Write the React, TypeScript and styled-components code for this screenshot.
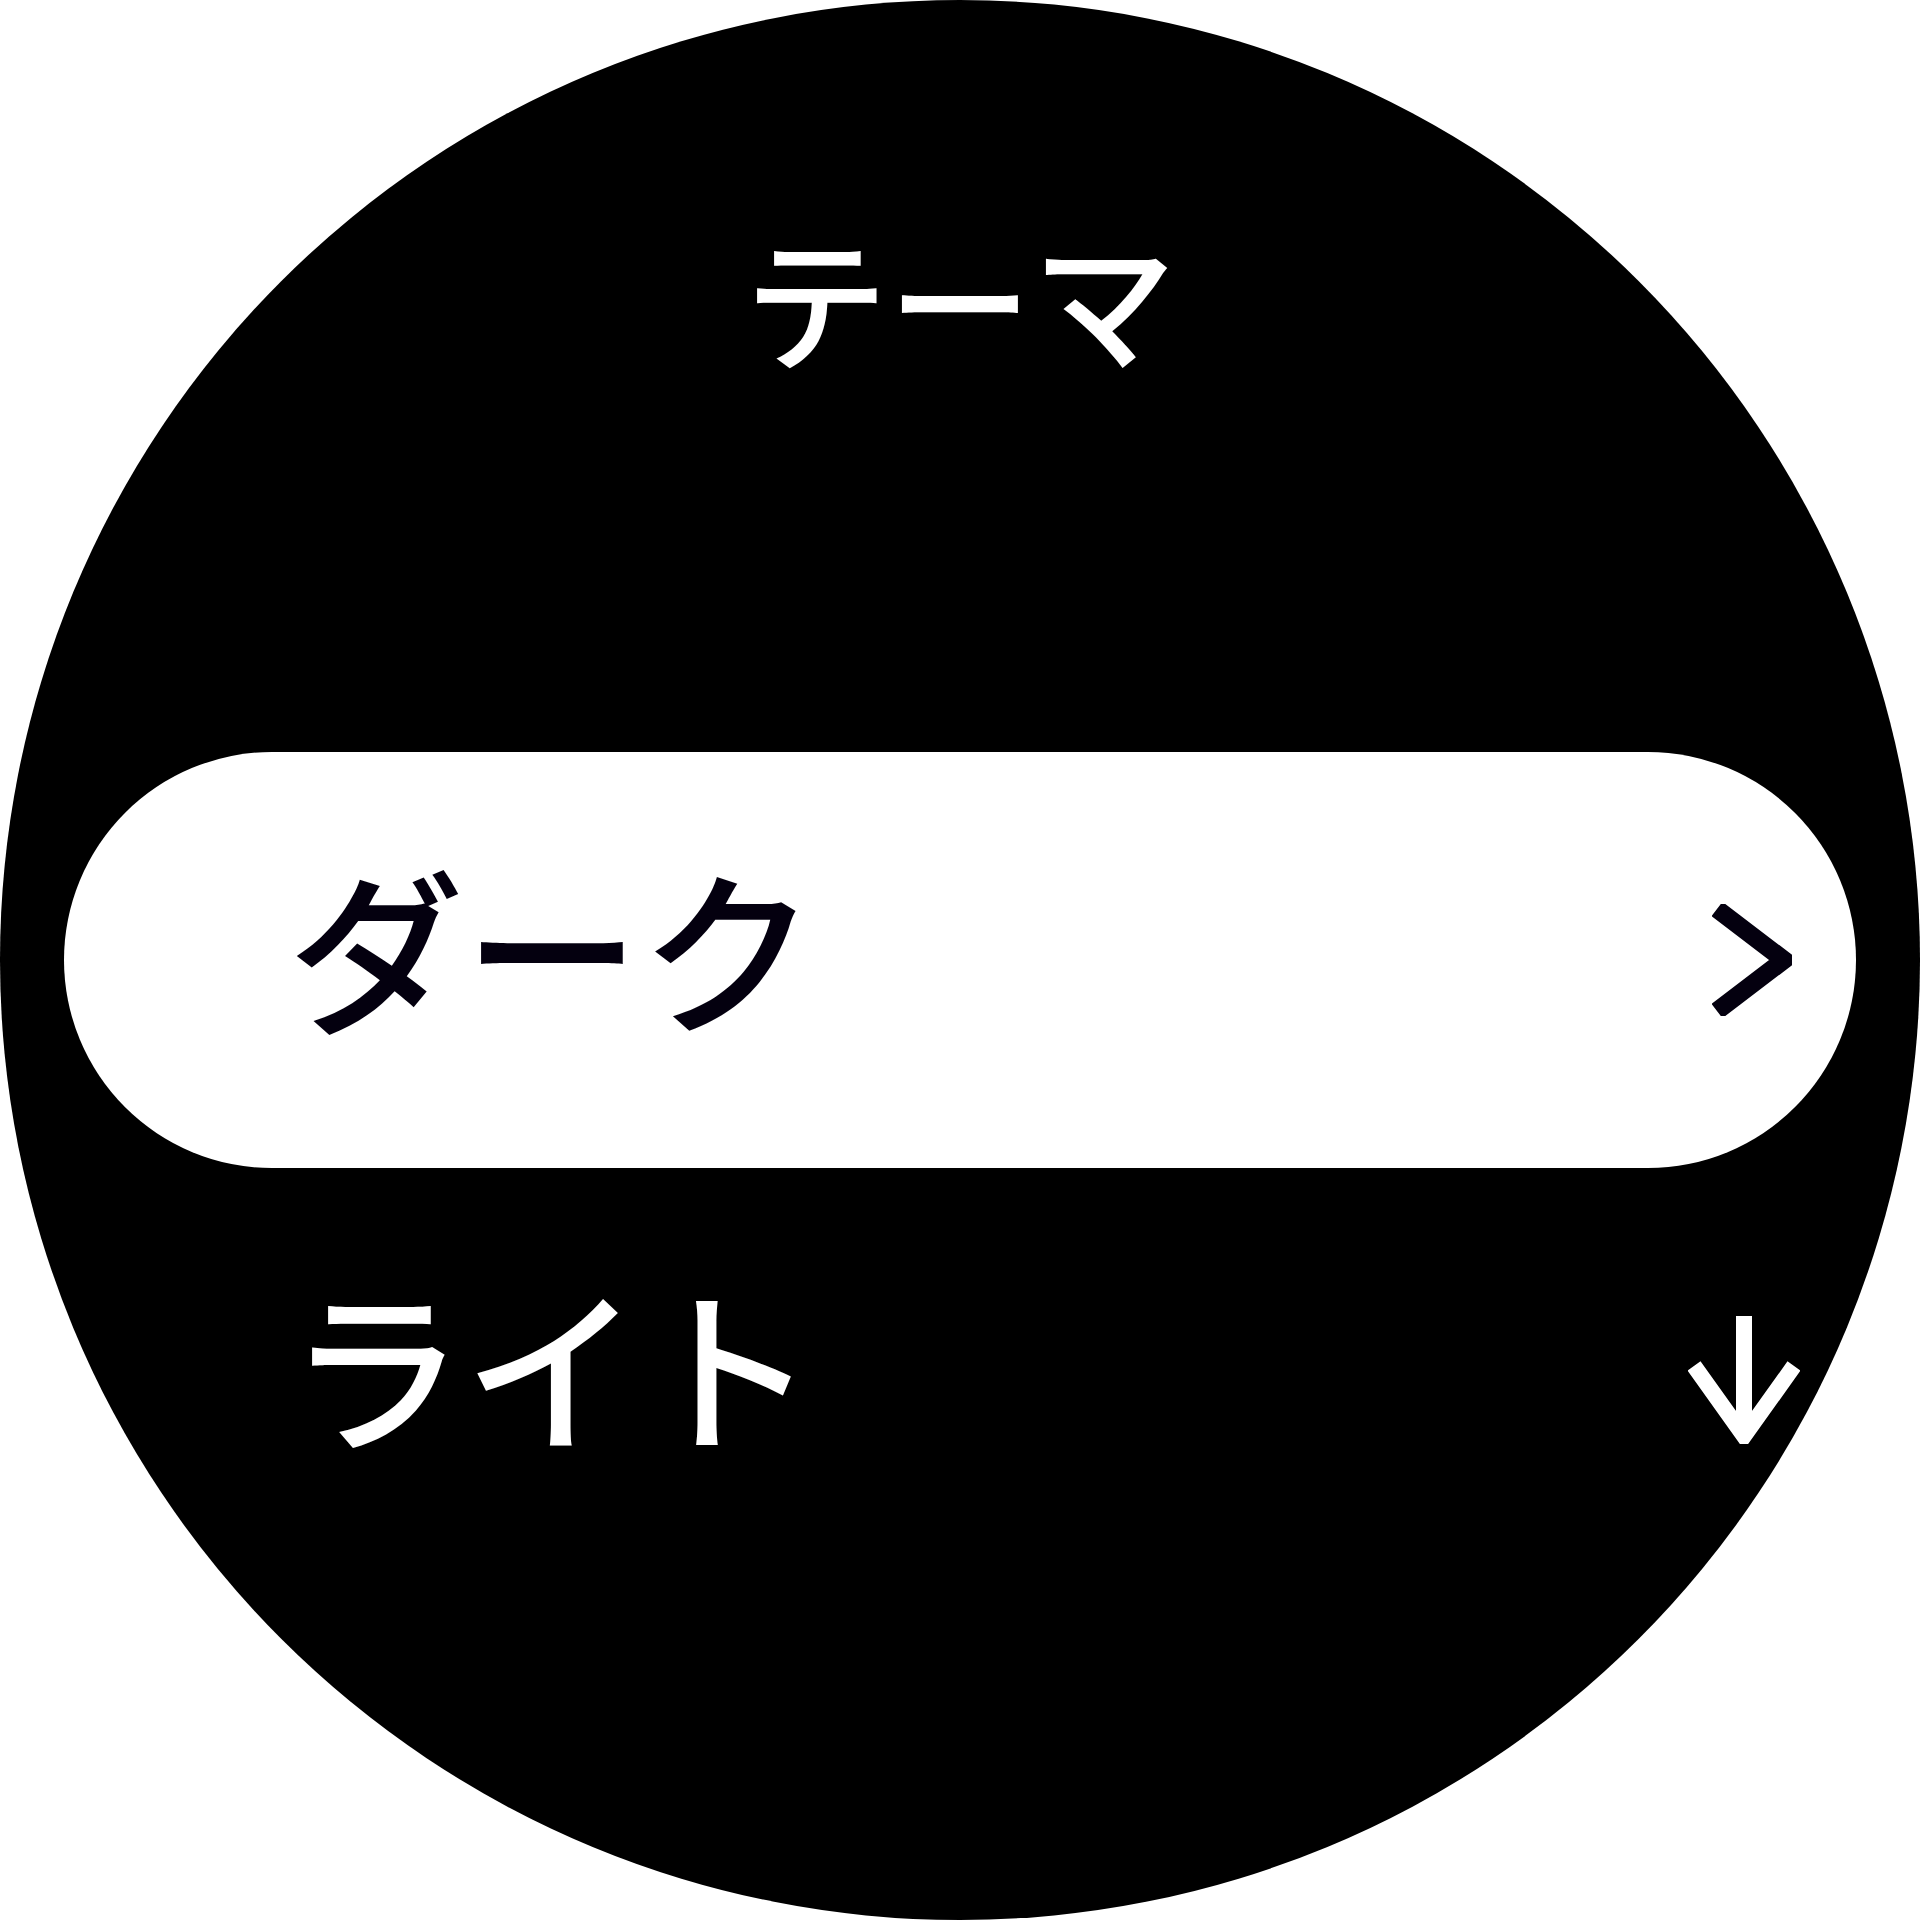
import React from "react";
import styled, { createGlobalStyle } from "styled-components";

const GlobalStyle = createGlobalStyle`
  html, body {
    margin: 0;
    padding: 0;
    background: #ffffff;
  }
  body {
    font-family: "Noto Sans CJK JP", "Noto Sans", sans-serif;
  }
`;

const Screen = styled.div`
  width: 1920px;
  height: 1920px;
  border-radius: 50%;
  background: #000000;
  overflow: hidden;
  display: flex;
  flex-direction: column;
  align-items: stretch;
  padding: 225px 64px 0;
  box-sizing: border-box;
`;

const Title = styled.h1`
  margin: 0;
  font-size: 144px;
  line-height: 1;
  font-weight: 500;
  color: #ffffff;
  text-align: center;
`;

const List = styled.div`
  display: flex;
  flex-direction: column;
  margin-top: 383px;
`;

interface OptionProps {
  $selected?: boolean;
}

const Option = styled.div<OptionProps>`
  display: flex;
  align-items: center;
  justify-content: space-between;
  height: 416px;
  box-sizing: border-box;
  padding: 0 64px 0 224px;
  border-radius: 208px;
  background: ${(p) => (p.$selected ? "#ffffff" : "transparent")};
  color: ${(p) => (p.$selected ? "#04000f" : "#ffffff")};
`;

const NextRow = styled.div`
  display: flex;
  align-items: flex-end;
  justify-content: space-between;
  padding: 107px 56px 0 224px;
  color: #ffffff;
`;

const Label = styled.span`
  font-size: 176px;
  line-height: 1;
  font-weight: 500;
`;

const OptionLabel = styled(Label)`
  padding-bottom: 30px;
`;

const ArrowIcon = styled.svg`
  display: block;
  margin-bottom: 7px;
`;

const Chevron = () => (
  <svg width="80" height="112" viewBox="0 0 80 112">
    <polyline
      points="5,5 72,56 5,107"
      fill="none"
      stroke="currentColor"
      strokeWidth="18"
    />
  </svg>
);

const DownArrow = () => (
  <ArrowIcon width="112" height="128" viewBox="0 0 112 128">
    <line x1="56" y1="0" x2="56" y2="118" stroke="currentColor" strokeWidth="16" />
    <polyline
      points="6,50 56,120 106,50"
      fill="none"
      stroke="currentColor"
      strokeWidth="16"
    />
  </ArrowIcon>
);

export default function App() {
  return (
    <>
      <GlobalStyle />
      <Screen>
        <Title>テーマ</Title>
        <List>
          <Option $selected>
            <OptionLabel>ダーク</OptionLabel>
            <Chevron />
          </Option>
          <NextRow>
            <Label>ライト</Label>
            <DownArrow />
          </NextRow>
        </List>
      </Screen>
    </>
  );
}
